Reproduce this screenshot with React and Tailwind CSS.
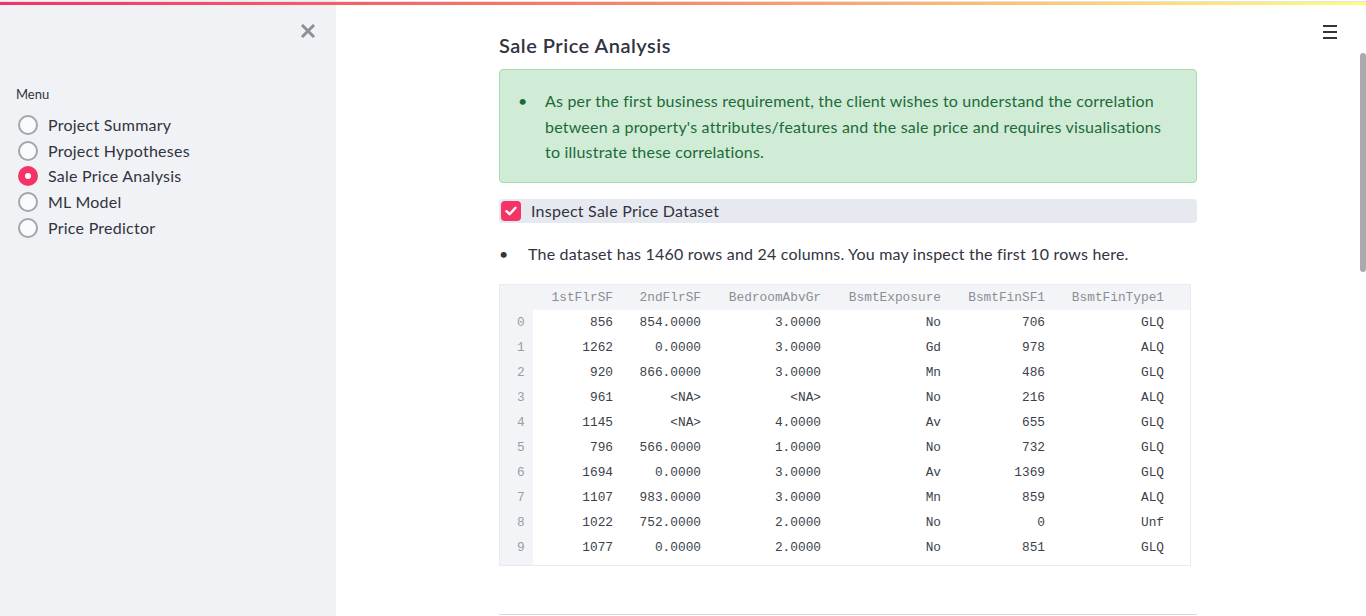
import React from "react";

const font = { fontFamily: "Lato, 'Noto Sans', sans-serif" };

const menu = ["Project Summary", "Project Hypotheses", "Sale Price Analysis", "ML Model", "Price Predictor"];

const cols = [
  { name: "1stFlrSF", w: "w-[92px]" },
  { name: "2ndFlrSF", w: "w-[88px]" },
  { name: "BedroomAbvGr", w: "w-[120px]" },
  { name: "BsmtExposure", w: "w-[120px]" },
  { name: "BsmtFinSF1", w: "w-[104px]" },
  { name: "BsmtFinType1", w: "w-[119px]" },
];

const rows = [
  ["856", "854.0000", "3.0000", "No", "706", "GLQ"],
  ["1262", "0.0000", "3.0000", "Gd", "978", "ALQ"],
  ["920", "866.0000", "3.0000", "Mn", "486", "GLQ"],
  ["961", "<NA>", "<NA>", "No", "216", "ALQ"],
  ["1145", "<NA>", "4.0000", "Av", "655", "GLQ"],
  ["796", "566.0000", "1.0000", "No", "732", "GLQ"],
  ["1694", "0.0000", "3.0000", "Av", "1369", "GLQ"],
  ["1107", "983.0000", "3.0000", "Mn", "859", "ALQ"],
  ["1022", "752.0000", "2.0000", "No", "0", "Unf"],
  ["1077", "0.0000", "2.0000", "No", "851", "GLQ"],
];

function Radio({ selected }) {
  if (selected) {
    return (
      <span className="w-[20px] h-[20px] rounded-full bg-[#f63366] flex items-center justify-center shrink-0">
        <span className="w-[6px] h-[6px] rounded-full bg-white" />
      </span>
    );
  }
  return <span className="w-[20px] h-[20px] rounded-full border-2 border-[#a2a5ad] bg-[#f9fafb] shrink-0" />;
}

export default function App() {
  return (
    <div className="relative w-[1366px] h-[616px] overflow-hidden bg-white text-[#31333f]" style={font}>
      {/* top decoration */}
      <div className="absolute left-0 right-0 top-[1px] h-[1px] bg-[#e4e4e4] z-20" />
      <div className="absolute left-0 right-0 top-[2px] h-[3px] z-20 bg-[linear-gradient(90deg,#f0336b,#f98c6a_50%,#fffd80)]" />

      <div className="flex h-full">
        {/* sidebar */}
        <aside className="w-[336px] shrink-0 h-full bg-[#f0f2f6] relative">
          <button className="absolute left-[300px] top-[23px] w-[16px] h-[16px] flex items-center justify-center">
            <svg width="14" height="14" viewBox="0 0 14 14">
              <path d="M2 2 L12 12 M12 2 L2 12" stroke="#8e9096" strokeWidth="3" strokeLinecap="square" />
            </svg>
          </button>
          <div className="pt-[86px] pl-[16px]">
            <div className="text-[13px] leading-[16px] text-[#31333f]">Menu</div>
            <div className="mt-[10px] flex flex-col">
              {menu.map((m, i) => (
                <div key={m} className="h-[25.75px] flex items-center pl-[2px]">
                  <Radio selected={i === 2} />
                  <span className="ml-[10px] text-[16px] leading-[20px] tracking-[0.25px] text-[#31333f]">{m}</span>
                </div>
              ))}
            </div>
          </div>
        </aside>

        {/* main */}
        <main className="w-[1024px] h-full flex justify-center">
          <div className="w-[698px] pt-[31px]">
            <h3 className="text-[20px] leading-[28px] font-semibold tracking-[0.5px] text-[#31333f]">Sale Price Analysis</h3>

            <div className="mt-[10px] h-[114px] rounded-[4px] border border-[#a6dcb4] bg-[#d0ecd7] pt-[18px] pl-[18px] pr-[20px] text-[#1d6a37]">
              <div className="flex">
                <span className="w-[27px] shrink-0 leading-[25.6px] text-[16px]">•</span>
                <p className="text-[16px] leading-[25.6px] tracking-[0.2px]">
                  As per the first business requirement, the client wishes to understand the correlation between a property's attributes/features and the sale price and requires visualisations to illustrate these correlations.
                </p>
              </div>
            </div>

            <div className="mt-[16px] h-[24px] rounded-[4px] bg-[#e6e9ef] flex items-center pl-[2px]">
              <span className="w-[20px] h-[20px] rounded-[4px] bg-[#f63366] flex items-center justify-center">
                <svg width="14" height="14" viewBox="0 0 14 14">
                  <path d="M2.5 7.2 L5.6 10.2 L11.5 3.8" stroke="white" strokeWidth="2.4" fill="none" strokeLinecap="round" strokeLinejoin="round" />
                </svg>
              </span>
              <span className="ml-[10px] text-[16px] tracking-[0.25px] text-[#31333f]">Inspect Sale Price Dataset</span>
            </div>

            <div className="mt-[19px] flex h-[24px] items-center">
              <span className="w-[29px] text-[16px]">•</span>
              <span className="text-[16px] tracking-[0.2px]">The dataset has 1460 rows and 24 columns. You may inspect the first 10 rows here.</span>
            </div>

            <div className="mt-[18px] w-[692px] h-[282px] border border-[#e8eaef] flex" style={{ fontFamily: "'Liberation Mono', 'DejaVu Sans Mono', monospace" }}>
              <div className="w-[33px] bg-[#f3f4f7] flex flex-col shrink-0">
                <div className="h-[25px]" />
                {rows.map((_, i) => (
                  <div key={i} className="h-[25px] flex items-center pl-[17px] text-[12.8px] text-[#9b9da4]">{i}</div>
                ))}
              </div>
              <div className="flex-1 flex flex-col">
                <div className="h-[25px] bg-[#f3f4f7] flex">
                  {cols.map((c) => (
                    <div key={c.name} className={`${c.w} pr-[12px] flex items-center justify-end text-[12.8px] text-[#8b8d94]`}>{c.name}</div>
                  ))}
                  <div className="flex-1" />
                </div>
                {rows.map((r, i) => (
                  <div key={i} className="h-[25px] flex">
                    {r.map((v, j) => (
                      <div key={j} className={`${cols[j].w} pr-[12px] flex items-center justify-end text-[12.8px] text-[#3d3f4a]`}>{v}</div>
                    ))}
                  </div>
                ))}
              </div>
            </div>

            <div className="mt-[48px] h-[1px] bg-[#d6d8dd]" />
          </div>
        </main>
      </div>

      {/* hamburger */}
      <div className="absolute left-[1323px] top-[25px] w-[14px] flex flex-col gap-[4px]">
        <span className="h-[2px] bg-[#31333f]" />
        <span className="h-[2px] bg-[#31333f]" />
        <span className="h-[2px] bg-[#31333f]" />
      </div>

      {/* scrollbar */}
      <div className="absolute left-[1360px] top-[53px] w-[6px] h-[219px] rounded-[3px] bg-[#a9a9ae]" />
    </div>
  );
}
